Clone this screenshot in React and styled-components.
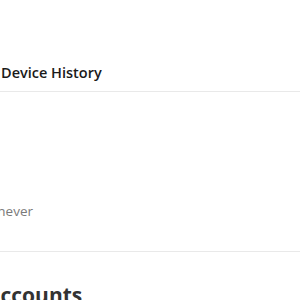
import React from "react";
import styled, { createGlobalStyle } from "styled-components";

const Global = createGlobalStyle`
	html, body {
		margin: 0;
		padding: 0;
		background: #ffffff;
		overflow: hidden;
	}
	body {
		font-family: "Open Sans", "Liberation Sans", sans-serif;
	}
`;

const Page = styled.div`
	width: 300px;
	height: 300px;
	overflow: hidden;
	background: #fff;
`;

const Section = styled.section`
	border-bottom: 1px solid #e9e9e9;
	padding-top: ${(p) => p.top}px;
	height: ${(p) => p.h}px;
	box-sizing: border-box;
`;

const SectionTitle = styled.h3`
	margin: 0;
	padding-left: 1px;
	font-size: 14.5px;
	font-weight: 600;
	color: #1a1a1a;
	line-height: 20px;
`;

const Note = styled.p`
	margin: 0;
	margin-left: -29px;
	font-size: 13.5px;
	color: #7a7a7a;
	line-height: 18px;
	white-space: nowrap;
`;

const BigHeading = styled.h2`
	margin: 0;
	margin-left: -14px;
	padding-top: 28px;
	font-size: 21px;
	font-weight: 700;
	color: #333;
	line-height: 30px;
	white-space: nowrap;
`;

export default function App() {
	return (
		<>
			<Global />
			<Page>
				<Section top={63} h={92}>
					<SectionTitle>Device History</SectionTitle>
				</Section>
				<Section top={110} h={160}>
					<Note>whenever</Note>
				</Section>
				<BigHeading>Accounts</BigHeading>
			</Page>
		</>
	);
}
